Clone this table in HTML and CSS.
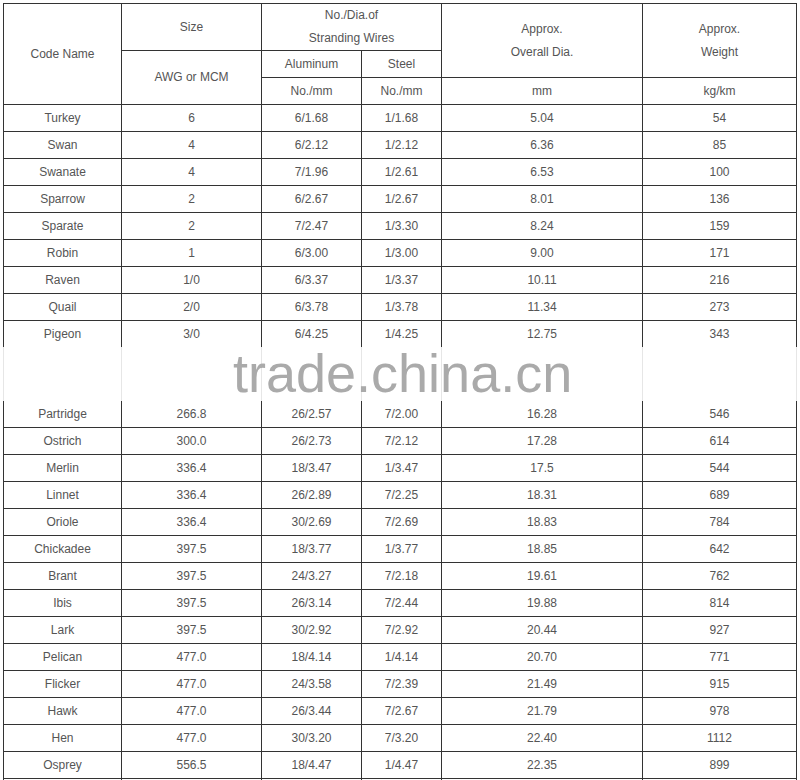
FILE: index.html
```html
<!DOCTYPE html>
<html>
<head>
<meta charset="utf-8">
<link rel="stylesheet" href="styles.css">
</head>
<body>
<div class="page">
<table class="spec">
<colgroup>
<col class="c1"><col class="c2"><col class="c3"><col class="c4"><col class="c5"><col class="c6">
</colgroup>
<thead>
<tr class="h1">
<td rowspan="3">Code Name</td>
<td>Size</td>
<td colspan="2">No./Dia.of<br>Stranding Wires</td>
<td rowspan="2">Approx.<br>Overall Dia.</td>
<td rowspan="2">Approx.<br>Weight</td>
</tr>
<tr>
<td rowspan="2">AWG or MCM</td>
<td>Aluminum</td>
<td>Steel</td>
</tr>
<tr>
<td>No./mm</td>
<td>No./mm</td>
<td>mm</td>
<td>kg/km</td>
</tr>
</thead>
<tbody>
<tr><td>Turkey</td><td>6</td><td>6/1.68</td><td>1/1.68</td><td>5.04</td><td>54</td></tr>
<tr><td>Swan</td><td>4</td><td>6/2.12</td><td>1/2.12</td><td>6.36</td><td>85</td></tr>
<tr><td>Swanate</td><td>4</td><td>7/1.96</td><td>1/2.61</td><td>6.53</td><td>100</td></tr>
<tr><td>Sparrow</td><td>2</td><td>6/2.67</td><td>1/2.67</td><td>8.01</td><td>136</td></tr>
<tr><td>Sparate</td><td>2</td><td>7/2.47</td><td>1/3.30</td><td>8.24</td><td>159</td></tr>
<tr><td>Robin</td><td>1</td><td>6/3.00</td><td>1/3.00</td><td>9.00</td><td>171</td></tr>
<tr><td>Raven</td><td>1/0</td><td>6/3.37</td><td>1/3.37</td><td>10.11</td><td>216</td></tr>
<tr><td>Quail</td><td>2/0</td><td>6/3.78</td><td>1/3.78</td><td>11.34</td><td>273</td></tr>
<tr class="before-gap"><td>Pigeon</td><td>3/0</td><td>6/4.25</td><td>1/4.25</td><td>12.75</td><td>343</td></tr>
<tr class="gap"><td></td><td></td><td></td><td></td><td></td><td></td></tr>
<tr class="after-gap"><td>Partridge</td><td>266.8</td><td>26/2.57</td><td>7/2.00</td><td>16.28</td><td>546</td></tr>
<tr><td>Ostrich</td><td>300.0</td><td>26/2.73</td><td>7/2.12</td><td>17.28</td><td>614</td></tr>
<tr><td>Merlin</td><td>336.4</td><td>18/3.47</td><td>1/3.47</td><td>17.5</td><td>544</td></tr>
<tr><td>Linnet</td><td>336.4</td><td>26/2.89</td><td>7/2.25</td><td>18.31</td><td>689</td></tr>
<tr><td>Oriole</td><td>336.4</td><td>30/2.69</td><td>7/2.69</td><td>18.83</td><td>784</td></tr>
<tr><td>Chickadee</td><td>397.5</td><td>18/3.77</td><td>1/3.77</td><td>18.85</td><td>642</td></tr>
<tr><td>Brant</td><td>397.5</td><td>24/3.27</td><td>7/2.18</td><td>19.61</td><td>762</td></tr>
<tr><td>Ibis</td><td>397.5</td><td>26/3.14</td><td>7/2.44</td><td>19.88</td><td>814</td></tr>
<tr><td>Lark</td><td>397.5</td><td>30/2.92</td><td>7/2.92</td><td>20.44</td><td>927</td></tr>
<tr><td>Pelican</td><td>477.0</td><td>18/4.14</td><td>1/4.14</td><td>20.70</td><td>771</td></tr>
<tr><td>Flicker</td><td>477.0</td><td>24/3.58</td><td>7/2.39</td><td>21.49</td><td>915</td></tr>
<tr><td>Hawk</td><td>477.0</td><td>26/3.44</td><td>7/2.67</td><td>21.79</td><td>978</td></tr>
<tr><td>Hen</td><td>477.0</td><td>30/3.20</td><td>7/3.20</td><td>22.40</td><td>1112</td></tr>
<tr><td>Osprey</td><td>556.5</td><td>18/4.47</td><td>1/4.47</td><td>22.35</td><td>899</td></tr>
<tr><td></td><td></td><td></td><td></td><td></td><td></td></tr>
</tbody>
</table>
<div class="watermark">trade.china.cn</div>
</div>
</body>
</html>
```
FILE: styles.css
```css
html, body {
  margin: 0;
  padding: 0;
  background: #fff;
}
.page {
  position: relative;
  padding: 3px 0 0 3px;
}
.spec {
  border-collapse: collapse;
  table-layout: fixed;
  width: 794px;
  font-family: "Liberation Sans", Arial, sans-serif;
  font-size: 12px;
  color: #555;
}
.c1 { width: 118px; }
.c2 { width: 140px; }
.c3 { width: 100px; }
.c4 { width: 80px; }
.c5 { width: 201px; }
.c6 { width: 154px; }
.spec td {
  border: 1px solid #333;
  text-align: center;
  vertical-align: middle;
  padding: 0;
  height: 26px;
  line-height: 23px;
}
.spec .h1 td {
  height: 46px;
}
.spec .before-gap td {
  border-bottom: none;
}
.spec .gap td {
  height: 54px;
  border-top: none;
  border-bottom: none;
  border-left-color: #e6e6e6;
  border-right-color: #e6e6e6;
}
.spec .after-gap td {
  border-top: none;
}
.watermark {
  position: absolute;
  left: 233px;
  top: 346px;
  font-family: "Liberation Sans", Arial, sans-serif;
  font-size: 54px;
  line-height: 54px;
  color: #aaa;
  white-space: nowrap;
}
```
